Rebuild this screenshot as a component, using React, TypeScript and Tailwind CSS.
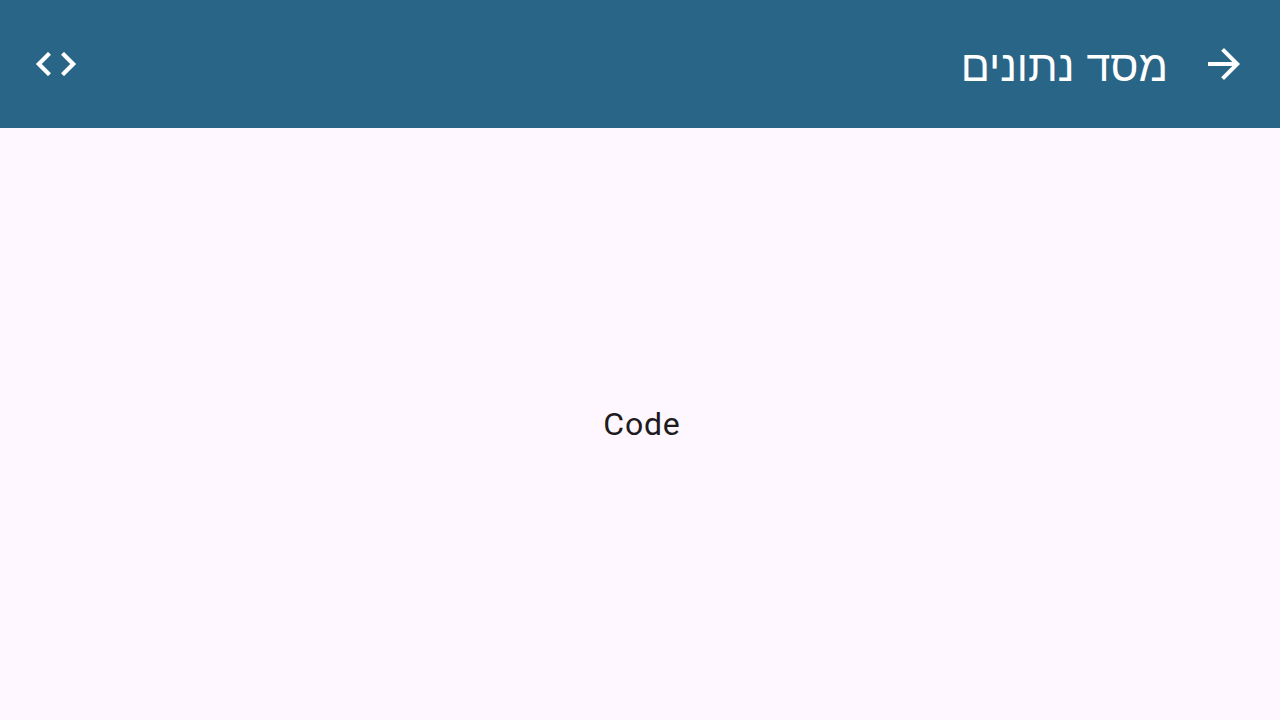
export default function App() {
  return (
    <div dir="rtl" className="flex min-h-screen flex-col bg-[#fef7ff] font-['Roboto','Liberation_Sans',sans-serif]">
      <header className="flex h-32 items-center bg-[#296587] px-8 text-white">
        <button type="button" aria-label="חזרה" className="flex size-12 items-center justify-center">
          <svg viewBox="0 0 24 24" className="size-12" fill="currentColor" aria-hidden="true">
            <path d="M12 4l-1.41 1.41L16.17 11H4v2h12.17l-5.58 5.59L12 20l8-8z" />
          </svg>
        </button>
        <h1 className="ms-8 flex-1 pt-1 font-['Liberation_Sans',sans-serif] text-[43px] leading-14 font-normal">מסד נתונים</h1>
        <button type="button" aria-label="Code" className="flex size-12 items-center justify-center">
          <svg viewBox="0 0 24 24" className="size-12" fill="currentColor" stroke="currentColor" strokeWidth="0.15" aria-hidden="true">
            <path d="M9.4 16.6L4.8 12l4.6-4.6L8 6l-6 6 6 6 1.4-1.4zm5.2 0l4.6-4.6-4.6-4.6L16 6l6 6-6 6-1.4-1.4z" />
          </svg>
        </button>
      </header>
      <main dir="ltr" className="flex flex-1 items-center justify-center">
        <p className="ps-1 text-[32px] leading-12 tracking-wide text-[#1d1b20]">Code</p>
      </main>
    </div>
  );
}
